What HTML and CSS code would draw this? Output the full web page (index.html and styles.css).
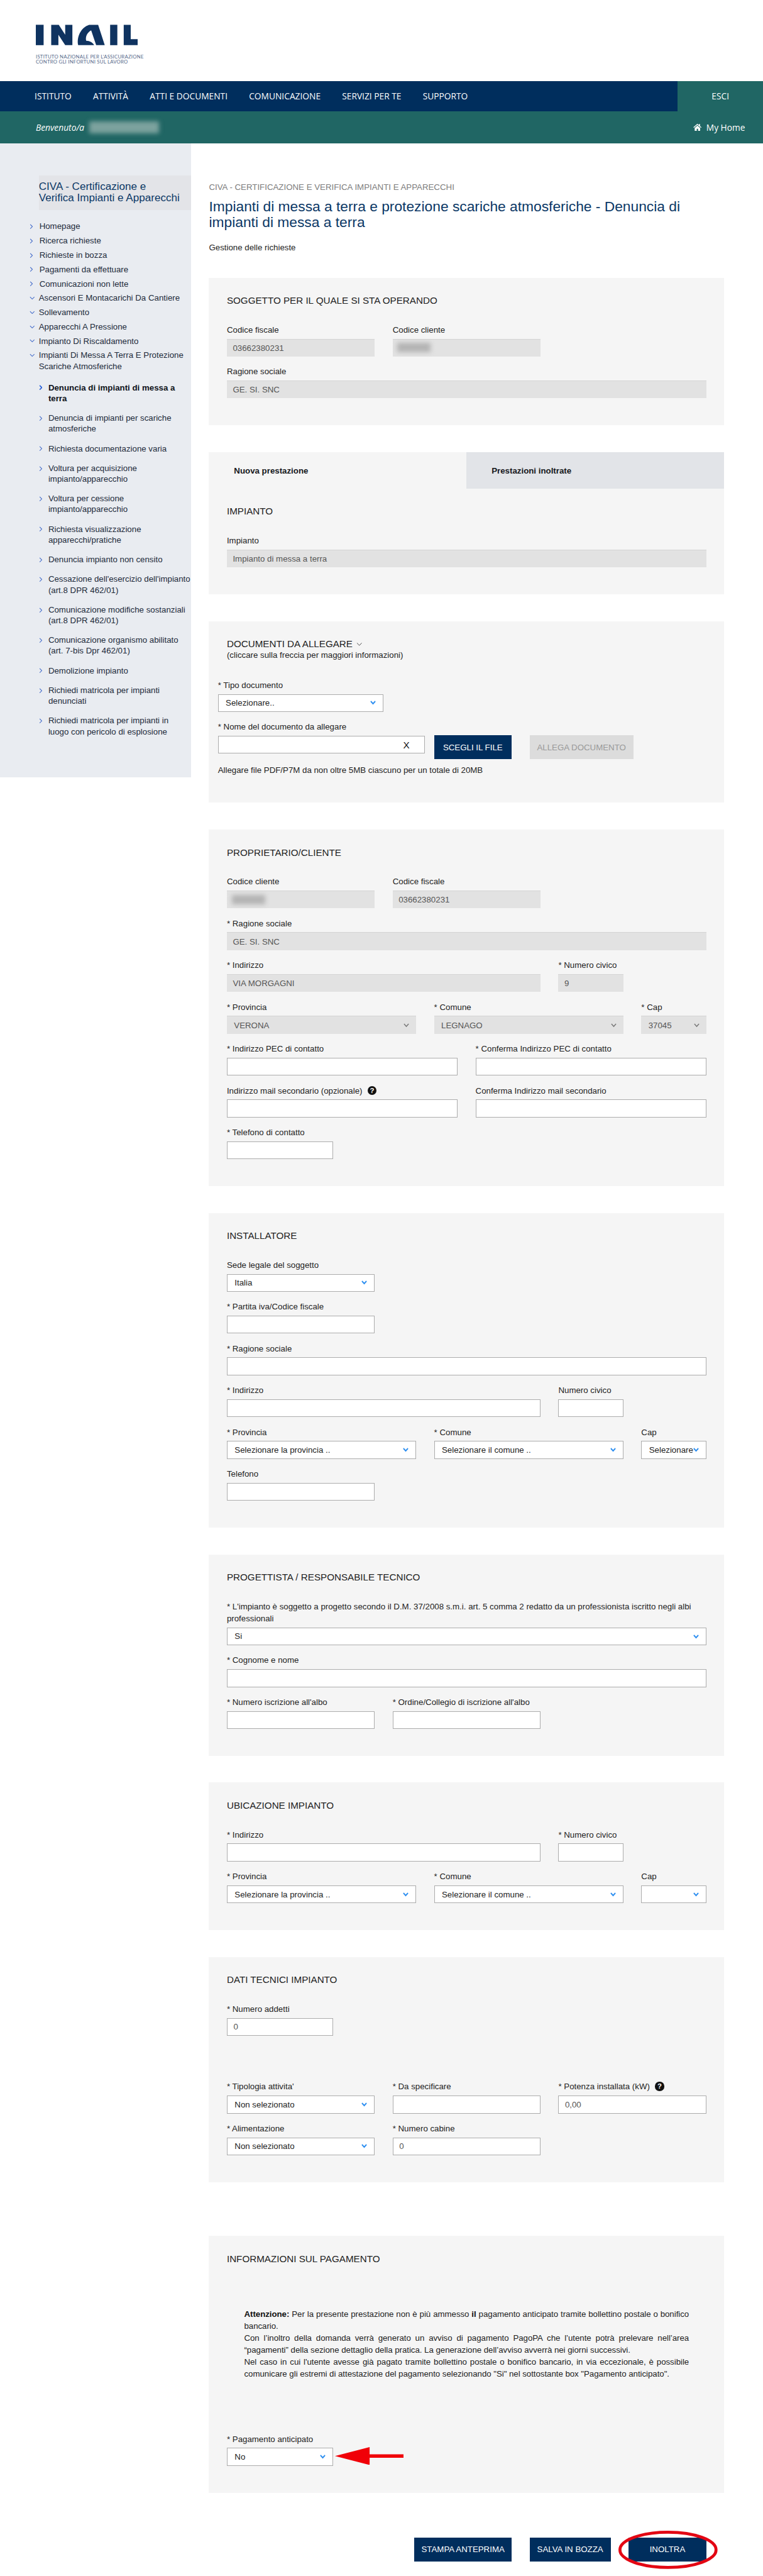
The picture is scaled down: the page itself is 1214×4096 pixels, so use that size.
FILE: index.html
```html
<!DOCTYPE html>
<html lang="it">
<head>
<meta charset="utf-8">
<title>INAIL - Denuncia di impianti di messa a terra</title>
<link rel="stylesheet" href="styles.css">
</head>
<body>
<svg class="defs" aria-hidden="true">
  <symbol id="cr" viewBox="0 0 6 10"><path d="M1 1l4 4-4 4" fill="none" stroke="currentColor"/></symbol>
  <symbol id="cd" viewBox="0 0 10 6"><path d="M1 1l4 4 4-4" fill="none" stroke="currentColor"/></symbol>
</svg>

<header class="brand">
  <svg class="logo" viewBox="33 32 511 102" aria-label="INAIL">
    <rect x="33" y="32" width="39" height="102"/>
    <polygon points="110,32 148,32 180,82 180,32 216,32 216,134 180,134 146,82 146,134 110,134"/>
    <path fill-rule="evenodd" d="M300 32H345L378 134H245C236 95 258 45 300 32ZM310 60C292 70 280 90 285 112C303 112 318 122 325 134H335Z"/>
    <rect x="405" y="32" width="36" height="102"/>
    <polygon points="473,32 508,32 508,104 544,104 544,134 473,134"/>
  </svg>
  <p class="tagline">ISTITUTO NAZIONALE PER L’ASSICURAZIONE<br>CONTRO GLI INFORTUNI SUL LAVORO</p>
</header>

<div class="topbar">
  <nav class="nav">
    <a>ISTITUTO</a><a>ATTIVITÀ</a><a>ATTI E DOCUMENTI</a><a>COMUNICAZIONE</a><a>SERVIZI PER TE</a><a>SUPPORTO</a>
  </nav>
  <a class="esci">ESCI</a>
</div>
<div class="welcome">
  <em class="hello">Benvenuto/a</em><span class="blur-name"></span>
  <a class="myhome">
    <svg class="home" viewBox="0 0 16 14"><path d="M8 0.5L0.3 7.2l1 1.1L8 2.6l6.7 5.7 1-1.1-2.7-2.3V1h-2v2.3zM2.8 8.6V14h3.9V10h2.6v4h3.9V8.6L8 4.2z" fill="#fff"/></svg>
    My Home
  </a>
</div>

<div class="layout">
  <aside class="side">
    <h2 class="side-title">CIVA - Certificazione e<br>Verifica Impianti e Apparecchi</h2>
    <ul class="menu">
      <li><svg class="cr"><use href="#cr"/></svg><span>Homepage</span></li>
      <li><svg class="cr"><use href="#cr"/></svg><span>Ricerca richieste</span></li>
      <li><svg class="cr"><use href="#cr"/></svg><span>Richieste in bozza</span></li>
      <li><svg class="cr"><use href="#cr"/></svg><span>Pagamenti da effettuare</span></li>
      <li><svg class="cr"><use href="#cr"/></svg><span>Comunicazioni non lette</span></li>
      <li><svg class="cd"><use href="#cd"/></svg><span>Ascensori E Montacarichi Da Cantiere</span></li>
      <li><svg class="cd"><use href="#cd"/></svg><span>Sollevamento</span></li>
      <li><svg class="cd"><use href="#cd"/></svg><span>Apparecchi A Pressione</span></li>
      <li><svg class="cd"><use href="#cd"/></svg><span>Impianto Di Riscaldamento</span></li>
      <li><svg class="cd"><use href="#cd"/></svg><span>Impianti Di Messa A Terra E Protezione Scariche Atmosferiche</span></li>
    </ul>
    <ul class="submenu">
      <li class="active"><svg class="cr"><use href="#cr"/></svg><span>Denuncia di impianti di messa a terra</span></li>
      <li><svg class="cr"><use href="#cr"/></svg><span>Denuncia di impianti per scariche atmosferiche</span></li>
      <li><svg class="cr"><use href="#cr"/></svg><span>Richiesta documentazione varia</span></li>
      <li><svg class="cr"><use href="#cr"/></svg><span>Voltura per acquisizione impianto/apparecchio</span></li>
      <li><svg class="cr"><use href="#cr"/></svg><span>Voltura per cessione impianto/apparecchio</span></li>
      <li><svg class="cr"><use href="#cr"/></svg><span>Richiesta visualizzazione apparecchi/pratiche</span></li>
      <li><svg class="cr"><use href="#cr"/></svg><span>Denuncia impianto non censito</span></li>
      <li><svg class="cr"><use href="#cr"/></svg><span>Cessazione dell'esercizio dell'impianto (art.8 DPR 462/01)</span></li>
      <li><svg class="cr"><use href="#cr"/></svg><span>Comunicazione modifiche sostanziali (art.8 DPR 462/01)</span></li>
      <li><svg class="cr"><use href="#cr"/></svg><span>Comunicazione organismo abilitato (art. 7-bis Dpr 462/01)</span></li>
      <li><svg class="cr"><use href="#cr"/></svg><span>Demolizione impianto</span></li>
      <li><svg class="cr"><use href="#cr"/></svg><span>Richiedi matricola per impianti denunciati</span></li>
      <li><svg class="cr"><use href="#cr"/></svg><span>Richiedi matricola per impianti in luogo con pericolo di esplosione</span></li>
    </ul>
  </aside>

  <main class="main">
    <p class="crumb">CIVA - CERTIFICAZIONE E VERIFICA IMPIANTI E APPARECCHI</p>
    <h1 class="title">Impianti di messa a terra e protezione scariche atmosferiche - Denuncia di impianti di messa a terra</h1>
    <p class="lead">Gestione delle richieste</p>

    <section class="panel">
      <h3 class="ptitle">SOGGETTO PER IL QUALE SI STA OPERANDO</h3>
      <div class="grid">
        <div class="f s4"><label>Codice fiscale</label><input class="inp" disabled value="03662380231"></div>
        <div class="f s4"><label>Codice cliente</label><div class="masked"><span class="blur-code"></span></div></div>
        <div class="f s12"><label>Ragione sociale</label><input class="inp" disabled value="GE. SI. SNC"></div>
      </div>
    </section>

    <section class="panel tabbed">
      <div class="tabs">
        <div class="tab on">Nuova prestazione</div>
        <div class="tab off">Prestazioni inoltrate</div>
      </div>
      <h3 class="ptitle">IMPIANTO</h3>
      <div class="grid">
        <div class="f s12"><label>Impianto</label><input class="inp" disabled value="Impianto di messa a terra"></div>
      </div>
    </section>

    <section class="panel">
      <h3 class="ptitle doc-title">DOCUMENTI DA ALLEGARE <svg class="cd-t"><use href="#cd"/></svg></h3>
      <p class="doc-sub">(cliccare sulla freccia per maggiori informazioni)</p>
      <div class="doc">
        <label class="doc-l1">* Tipo documento</label>
        <div class="sel doc-sel">Selezionare..</div>
        <label class="doc-l2">* Nome del documento da allegare</label>
        <div class="doc-row">
          <div class="file"><span class="file-x">X</span></div>
          <button class="btn b-scegli">SCEGLI IL FILE</button>
          <button class="btn b-allega" disabled>ALLEGA DOCUMENTO</button>
        </div>
        <p class="doc-note">Allegare file PDF/P7M da non oltre 5MB ciascuno per un totale di 20MB</p>
      </div>
    </section>

    <section class="panel">
      <h3 class="ptitle">PROPRIETARIO/CLIENTE</h3>
      <div class="grid">
        <div class="f s4"><label>Codice cliente</label><div class="masked"><span class="blur-code"></span></div></div>
        <div class="f s4"><label>Codice fiscale</label><input class="inp" disabled value="03662380231"></div>
        <div class="f s12"><label>* Ragione sociale</label><input class="inp" disabled value="GE. SI. SNC"></div>
        <div class="f s8"><label>* Indirizzo</label><input class="inp" disabled value="VIA MORGAGNI"></div>
        <div class="f s2"><label>* Numero civico</label><input class="inp" disabled value="9"></div>
        <div class="f s5"><label>* Provincia</label><div class="sel dis">VERONA</div></div>
        <div class="f s5"><label>* Comune</label><div class="sel dis">LEGNAGO</div></div>
        <div class="f s2"><label>* Cap</label><div class="sel dis">37045</div></div>
        <div class="f s6"><label>* Indirizzo PEC di contatto</label><input class="inp"></div>
        <div class="f s6"><label>* Conferma Indirizzo PEC di contatto</label><input class="inp"></div>
        <div class="f s6"><label>Indirizzo mail secondario (opzionale) <span class="help">?</span></label><input class="inp"></div>
        <div class="f s6"><label>Conferma Indirizzo mail secondario</label><input class="inp"></div>
        <div class="f s3"><label>* Telefono di contatto</label><input class="inp"></div>
      </div>
    </section>

    <section class="panel">
      <h3 class="ptitle">INSTALLATORE</h3>
      <div class="grid">
        <div class="f s4"><label>Sede legale del soggetto</label><div class="sel">Italia</div></div>
        <div class="f s4 nl"><label>* Partita iva/Codice fiscale</label><input class="inp"></div>
        <div class="f s12"><label>* Ragione sociale</label><input class="inp"></div>
        <div class="f s8"><label>* Indirizzo</label><input class="inp"></div>
        <div class="f s2"><label>Numero civico</label><input class="inp"></div>
        <div class="f s5"><label>* Provincia</label><div class="sel">Selezionare la provincia ..</div></div>
        <div class="f s5"><label>* Comune</label><div class="sel">Selezionare il comune ..</div></div>
        <div class="f s2"><label>Cap</label><div class="sel">Selezionare</div></div>
        <div class="f s4"><label>Telefono</label><input class="inp"></div>
      </div>
    </section>

    <section class="panel">
      <h3 class="ptitle">PROGETTISTA / RESPONSABILE TECNICO</h3>
      <div class="grid">
        <div class="f s12"><label>* L'impianto è soggetto a progetto secondo il D.M. 37/2008 s.m.i. art. 5 comma 2 redatto da un professionista iscritto negli albi professionali</label><div class="sel">Si</div></div>
        <div class="f s12"><label>* Cognome e nome</label><input class="inp"></div>
        <div class="f s4"><label>* Numero iscrizione all'albo</label><input class="inp"></div>
        <div class="f s4"><label>* Ordine/Collegio di iscrizione all'albo</label><input class="inp"></div>
      </div>
    </section>

    <section class="panel">
      <h3 class="ptitle">UBICAZIONE IMPIANTO</h3>
      <div class="grid">
        <div class="f s8"><label>* Indirizzo</label><input class="inp"></div>
        <div class="f s2"><label>* Numero civico</label><input class="inp"></div>
        <div class="f s5"><label>* Provincia</label><div class="sel">Selezionare la provincia ..</div></div>
        <div class="f s5"><label>* Comune</label><div class="sel">Selezionare il comune ..</div></div>
        <div class="f s2"><label>Cap</label><div class="sel"></div></div>
      </div>
    </section>

    <section class="panel gap-after">
      <h3 class="ptitle">DATI TECNICI IMPIANTO</h3>
      <div class="grid">
        <div class="f s3"><label>* Numero addetti</label><input class="inp" value="0"></div>
        <div class="spacer"></div>
        <div class="f s4"><label>* Tipologia attivita'</label><div class="sel">Non selezionato</div></div>
        <div class="f s4"><label>* Da specificare</label><input class="inp"></div>
        <div class="f s4"><label>* Potenza installata (kW) <span class="help">?</span></label><input class="inp" value="0,00"></div>
        <div class="f s4"><label>* Alimentazione</label><div class="sel">Non selezionato</div></div>
        <div class="f s4"><label>* Numero cabine</label><input class="inp" value="0"></div>
      </div>
    </section>

    <section class="panel">
      <h3 class="ptitle">INFORMAZIONI SUL PAGAMENTO</h3>
      <p class="notice"><b>Attenzione:</b> Per la presente prestazione non è più ammesso <b>il</b> pagamento anticipato tramite bollettino postale o bonifico bancario.<br>Con l’inoltro della domanda verrà generato un avviso di pagamento PagoPA che l’utente potrà prelevare nell’area “pagamenti” della sezione dettaglio della pratica. La generazione dell’avviso avverrà nei giorni successivi.<br>Nel caso in cui l'utente avesse già pagato tramite bollettino postale o bonifico bancario, in via eccezionale, è possibile comunicare gli estremi di attestazione del pagamento selezionando "Si" nel sottostante box "Pagamento anticipato".</p>
      <div class="grid pay">
        <div class="f s3 arrow-host"><label>* Pagamento anticipato</label><div class="sel">No</div>
          <svg class="arrow" viewBox="0 0 115 30"><polygon points="0,15 58,0 58,12 115,12 115,18 58,18 58,30" fill="#f00008"/></svg>
        </div>
      </div>
    </section>

    <div class="actions">
      <button class="btn b-stampa">STAMPA ANTEPRIMA</button>
      <button class="btn b-salva">SALVA IN BOZZA</button>
      <div class="inoltra">
        <button class="btn b-inoltra">INOLTRA</button>
        <svg class="ring" viewBox="0 0 166 64"><ellipse cx="83" cy="32" rx="80.5" ry="29.5" fill="none" stroke="#e30613" stroke-width="5"/></svg>
      </div>
    </div>
  </main>
</div>
</body>
</html>
```

FILE: styles.css
```css
/* 1rem = 10 reference pixels, at the 0.95 scale of the window */
html { font-size: 9.499px; }
* { box-sizing: border-box; }
body {
  margin: 0;
  background: #fff;
  color: #222;
  font-family: "Liberation Sans", Arial, sans-serif;
  font-size: 1.4rem;
  line-height: 2rem;
}
p, h1, h2, h3, ul { margin: 0; padding: 0; }
ul { list-style: none; }
.defs { display: none; }

/* header */
.brand { height: 13.6rem; padding: 4.1rem 0 0 6rem; }
.logo { display: block; width: 17.1rem; height: 3.5rem; fill: #0f3360; }
.tagline {
  margin-top: 1.5rem;
  font-family: "Lato", sans-serif;
  font-size: 0.82rem;
  line-height: 0.84rem;
  letter-spacing: 0.025rem;
  color: #56698a;
  white-space: nowrap;
}
.topbar { display: flex; height: 5rem; background: #002e5d; }
.nav {
  display: flex;
  align-items: center;
  gap: 3.6rem;
  width: 113.5rem;
  padding-left: 5.8rem;
}
.nav a, .esci {
  color: #fff;
  font-family: "Open Sans", sans-serif;
  font-size: 1.45rem;
}
.esci {
  flex: 1;
  display: flex;
  align-items: center;
  padding-left: 5.7rem;
  background: #206664;
}
.welcome {
  display: flex;
  align-items: center;
  height: 5.4rem;
  padding: 0 3rem 0 6rem;
  background: #206664;
  color: #fff;
  font-family: "Open Sans", sans-serif;
  font-size: 1.45rem;
}
.hello { width: 8.6rem; }
.blur-name {
  width: 11.6rem;
  height: 2rem;
  margin-left: 0.4rem;
  background: #7ca29e;
  filter: blur(0.4rem);
}
.myhome { display: flex; align-items: center; gap: 0.8rem; margin-left: auto; }
.home { width: 1.4rem; height: 1.3rem; }

/* layout */
.layout { display: flex; align-items: flex-start; }
.side {
  flex: 0 0 32rem;
  padding: 5.4rem 0 5.3rem;
  background: #e9ecf1;
}
.side-title {
  height: 5.8rem;
  margin: 0 0 1.8rem 6.5rem;
  padding-top: 0.9rem;
  background: #e3e4e8;
  color: #0b3866;
  font-size: 1.8rem;
  font-weight: 400;
  line-height: 1.95rem;
}
.menu li, .submenu li {
  display: flex;
  color: #212a3a;
  font-size: 1.4rem;
  line-height: 1.8rem;
}
.menu { padding-left: 4.9rem; }
.menu li { margin-bottom: 0.6rem; }
.submenu { padding: 1.2rem 0 0 6.4rem; }
.submenu li { margin-bottom: 1.5rem; }
.menu svg, .submenu svg { flex: 0 0 auto; color: #3f68c8; stroke-width: 1.2; }
.cr { width: 0.6rem; height: 0.9rem; margin: 0.5rem 1rem 0 0.1rem; }
.cd { width: 0.9rem; height: 0.6rem; margin: 0.6rem 0.7rem 0 0; }
.submenu .active { font-weight: 700; color: #10131a; }
.submenu .active svg { stroke-width: 2; color: #2c62d8; }

.main { width: 86.3rem; margin-left: 3rem; padding: 6.3rem 0 2.2rem; }
.crumb { color: #7d7d7d; font-size: 1.4rem; }
.title {
  margin-top: 1rem;
  color: #0b3866;
  font-size: 2.4rem;
  font-weight: 400;
  line-height: 2.6rem;
}
.lead { margin: 1.9rem 0 4.1rem; }

/* panels */
.panel {
  margin-bottom: 4.5rem;
  padding: 2.8rem 3rem 4.5rem;
  background: #f5f5f5;
}
.gap-after { margin-bottom: 9rem; }
.tabbed { padding-top: 0; }
.tabs { display: flex; height: 6.1rem; margin: 0 -3rem 2.8rem; }
.tab { flex: 1; padding: 2.1rem 0 0 4.2rem; font-weight: 700; color: #16181c; }
.off { background: #e2e4e8; }
.ptitle {
  color: #222;
  font-size: 1.6rem;
  font-weight: 400;
  line-height: 2rem;
  margin-bottom: 2.9rem;
}
.grid {
  display: grid;
  grid-template-columns: repeat(12, 1fr);
  column-gap: 3rem;
  row-gap: 1.5rem;
}
.f label { display: block; margin-bottom: 0.5rem; color: #222; }
.s2 { grid-column: span 2; }
.s3 { grid-column: span 3; }
.s4 { grid-column: span 4; }
.s5 { grid-column: span 5; }
.s6 { grid-column: span 6; }
.s8 { grid-column: span 8; }
.s12 { grid-column: span 12; }
.nl { grid-column: 1 / span 4; }
.spacer { grid-column: 1 / -1; height: 4.5rem; }

.inp, .sel, .masked {
  display: block;
  width: 100%;
  height: 3rem;
  margin: 0;
  border: 1px solid #acacac;
  border-radius: 0;
  background-color: #fff;
  color: #555;
  font-family: "Liberation Sans", Arial, sans-serif;
  font-size: 1.4rem;
  line-height: 2rem;
  outline: 0;
}
.inp { padding: 0 1rem; }
.inp:disabled, .masked {
  border: 0;
  border-top: 1px solid #d4d4d4;
  background: #e2e2e2;
  opacity: 1;
}
.masked { padding: 0.6rem 0 0 0.8rem; }
.blur-code {
  display: block;
  width: 5.6rem;
  height: 1.6rem;
  background: #b4b4b4;
  filter: blur(0.4rem);
}
.sel {
  display: flex;
  align-items: center;
  padding: 0 0 0 1.2rem;
  overflow: hidden;
  white-space: nowrap;
  color: #222;
  background-image: url("data:image/svg+xml,%3Csvg xmlns='http://www.w3.org/2000/svg' viewBox='0 0 10 7'%3E%3Cpath d='M1 1l4 4 4-4' fill='none' stroke='%232a8df0' stroke-width='2'/%3E%3C/svg%3E");
  background-repeat: no-repeat;
  background-position: right 1.1rem center;
  background-size: 1rem 0.7rem;
}
.sel.dis {
  border: 0;
  border-top: 1px solid #d4d4d4;
  color: #555;
  background-color: #e2e2e2;
  background-image: url("data:image/svg+xml,%3Csvg xmlns='http://www.w3.org/2000/svg' viewBox='0 0 10 7'%3E%3Cpath d='M1 1l4 4 4-4' fill='none' stroke='%23777' stroke-width='1.6'/%3E%3C/svg%3E");
}
.help {
  display: inline-block;
  width: 1.5rem;
  height: 1.5rem;
  margin-left: 0.5rem;
  border-radius: 50%;
  background: #111;
  color: #fff;
  font-size: 1.2rem;
  font-weight: 700;
  line-height: 1.5rem;
  text-align: center;
  vertical-align: 0.1rem;
}

/* documents */
.doc-title { margin-bottom: 0; }
.cd-t { width: 1rem; height: 0.7rem; margin-left: 0.2rem; color: #444; vertical-align: 0.2rem; }
.doc-sub { line-height: 1.8rem; }
.doc { margin: 3.1rem 0 0 -1.5rem; }
.doc label { display: block; }
.doc-l1 { margin-bottom: 0.5rem; }
.sel.doc-sel { width: 27.7rem; }
.doc-l2 { margin: 1.5rem 0 0.4rem; }
.doc-row { display: flex; align-items: flex-start; }
.file {
  display: flex;
  align-items: center;
  justify-content: flex-end;
  width: 34.7rem;
  height: 3rem;
  margin: 0.1rem 1.5rem 0 0;
  padding-right: 2.5rem;
  border: 1px solid #acacac;
  background: #fff;
}
.file-x { color: #111; font-size: 1.6rem; }
.btn {
  height: 4rem;
  padding: 0;
  border: 0;
  border-radius: 0;
  background: #002e5d;
  color: #fff;
  font-family: "Liberation Sans", Arial, sans-serif;
  font-size: 1.4rem;
  line-height: 2rem;
}
.b-scegli { width: 13rem; margin-right: 3rem; }
.b-allega { width: 17.4rem; background: #dcdcdc; color: #999; }
.doc-note { margin-top: 0.8rem; }

/* payment */
.notice {
  margin: 7.3rem 2.9rem 0;
  text-align: justify;
  letter-spacing: -0.04px;
  color: #222;
}
.notice b { color: #111; }
.pay { margin-top: 8.9rem; }
.arrow-host { position: relative; }
.arrow {
  position: absolute;
  left: calc(100% + 0.3rem);
  top: 2.3rem;
  width: 11.5rem;
  height: 3rem;
}

/* actions */
.actions {
  display: flex;
  justify-content: flex-end;
  gap: 3rem;
  margin-top: 7.5rem;
  padding-right: 3rem;
}
.b-stampa { width: 16.3rem; }
.b-salva { width: 13.6rem; }
.b-inoltra { display: block; width: 13rem; }
.inoltra { position: relative; }
.ring {
  position: absolute;
  left: -1.7rem;
  top: -1.1rem;
  width: 16.6rem;
  height: 6.4rem;
}
```
